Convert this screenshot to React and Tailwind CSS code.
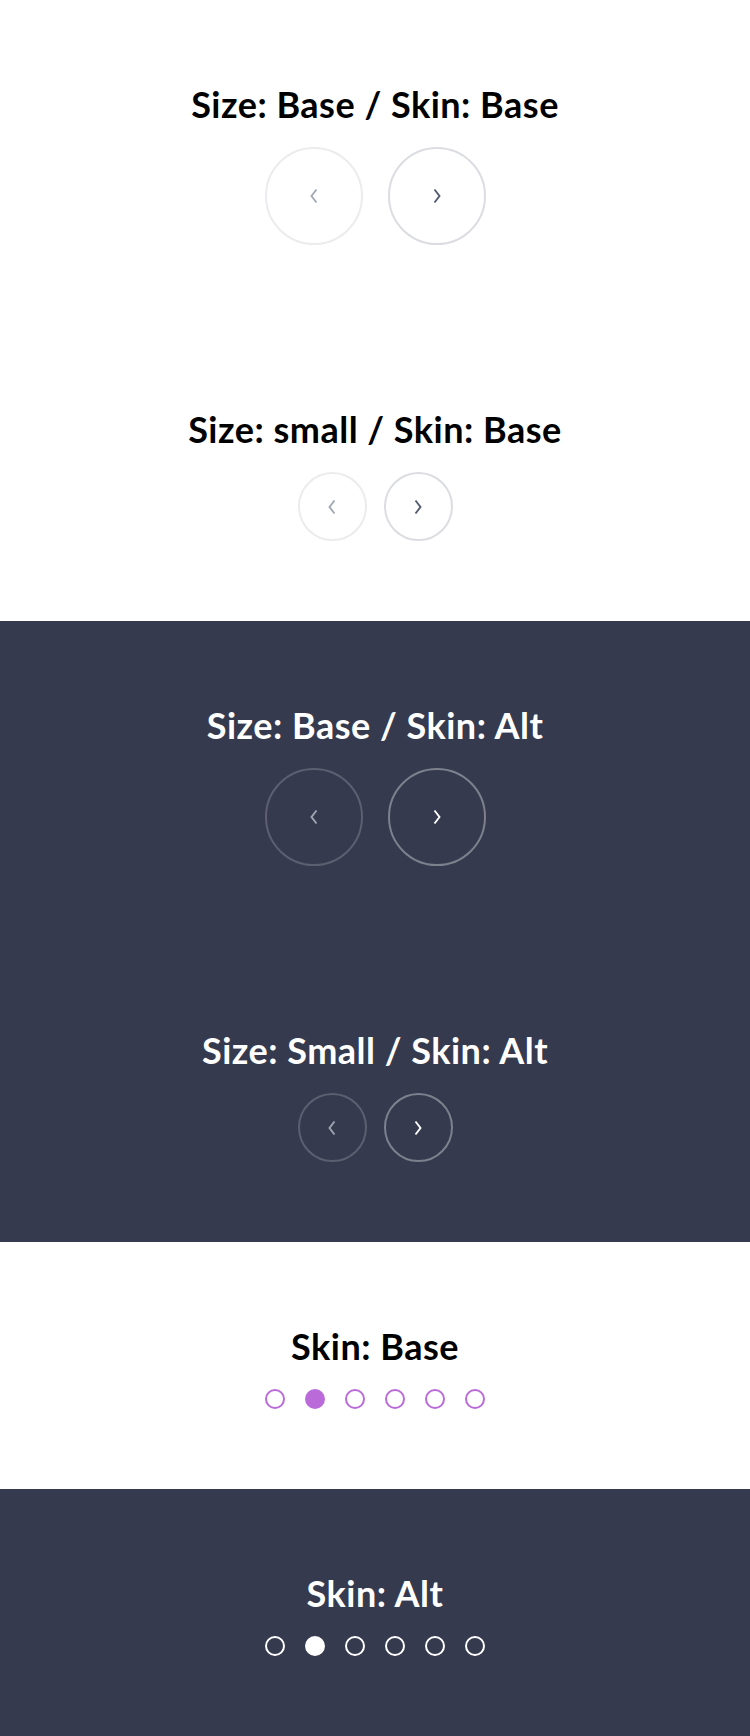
import React from 'react';

const font = { fontFamily: 'Lato, "Open Sans", sans-serif' };

function Chevron({ dir }) {
  return (
    <svg width="10" height="16" viewBox="0 0 10 16" fill="none">
      {dir === 'left' ? (
        <polyline points="7.5,1.5 2.5,8 7.5,14.5" stroke="currentColor" strokeWidth="1.9" />
      ) : (
        <polyline points="2.5,1.5 7.5,8 2.5,14.5" stroke="currentColor" strokeWidth="1.9" />
      )}
    </svg>
  );
}

function Arrows({ small, alt }) {
  const size = small ? 'w-[69px] h-[69px]' : 'w-[98px] h-[98px]';
  const gap = small ? 'gap-[17px]' : 'gap-[25px]';
  const prev = alt ? 'border-[#5b5f70] text-[#a3a6b1]' : 'border-[#ececee] text-[#a2a9b5]';
  const next = alt ? 'border-[#7d808d] text-white' : 'border-[#dcdde1] text-[#535b70]';
  return (
    <div className={`flex ${gap} mt-[23px]`}>
      <button className={`${size} rounded-full border-2 ${prev} flex items-center justify-center`}>
        <Chevron dir="left" />
      </button>
      <button className={`${size} rounded-full border-2 ${next} flex items-center justify-center`}>
        <Chevron dir="right" />
      </button>
    </div>
  );
}

function Dots({ alt }) {
  const ring = alt ? 'border-white' : 'border-[#bb6bd9]';
  const fill = alt ? 'bg-white' : 'bg-[#bb6bd9]';
  return (
    <div className="flex gap-[20px] mt-[23px]">
      {[0, 1, 2, 3, 4, 5].map((i) => (
        <span key={i} className={`w-[20px] h-[20px] rounded-full border-2 ${ring} ${i === 1 ? fill : ''}`} />
      ))}
    </div>
  );
}

function Section({ title, alt, children }) {
  return (
    <section className={`flex flex-col items-center pt-[84px] pb-[80px] ${alt ? 'bg-[#353a4e] text-white' : 'bg-white text-black'}`}>
      <h2 className="text-[36px] leading-[40px] font-bold tracking-[0.5px]" style={font}>{title}</h2>
      {children}
    </section>
  );
}

export default function App() {
  return (
    <div className="w-[750px]" style={font}>
      <Section title="Size: Base / Skin: Base">
        <Arrows />
      </Section>
      <Section title="Size: small / Skin: Base">
        <Arrows small />
      </Section>
      <Section title="Size: Base / Skin: Alt" alt>
        <Arrows alt />
      </Section>
      <Section title="Size: Small / Skin: Alt" alt>
        <Arrows small alt />
      </Section>
      <Section title="Skin: Base">
        <Dots />
      </Section>
      <Section title="Skin: Alt" alt>
        <Dots alt />
      </Section>
    </div>
  );
}
